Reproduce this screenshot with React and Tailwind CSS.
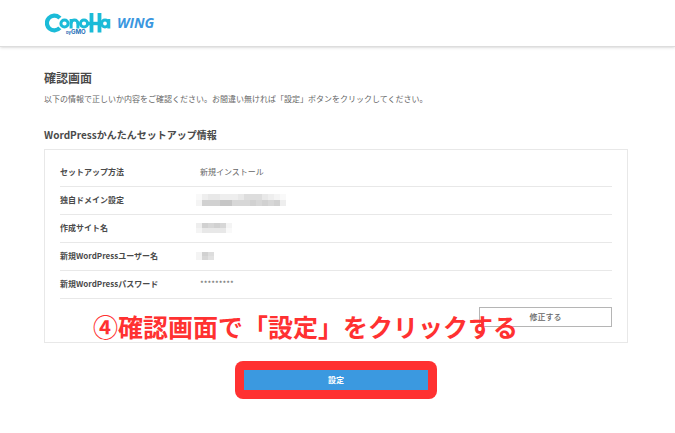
const ROWS = [
  { id: "method", label: "セットアップ方法", value: "新規インストール" },
  { id: "domain", label: "独自ドメイン設定", mask: "domain" },
  { id: "site", label: "作成サイト名", mask: "site" },
  { id: "user", label: "新規WordPressユーザー名", mask: "user" },
  { id: "password", label: "新規WordPressパスワード", value: "*********" },
];

// darkness of each mosaic cell, row by row
const MASKS = {
  domain: {
    cellHeight: 6,
    rows: [
      [1, 3, 4, 4, 3, 3, 3, 4, 6, 6, 6, 4, 3, 2, 1],
      [2, 8, 8, 8, 10, 10, 7, 7, 7, 8, 7, 8, 7, 8, 3],
    ],
  },
  site: {
    cellHeight: 5,
    rows: [
      [3, 8, 7, 8, 7, 2],
      [2, 4, 4, 4, 4, 1],
    ],
  },
  user: {
    cellHeight: 4,
    rows: [
      [2, 8, 6],
      [2, 7, 5],
    ],
  },
};

const Mosaic = ({ name }) => {
  const { cellHeight, rows } = MASKS[name];
  return (
    <svg
      className="-ml-1 block"
      width={6 * rows[0].length}
      height={cellHeight * rows.length}
      shapeRendering="crispEdges"
      aria-hidden="true"
    >
      {rows.map((row, y) =>
        row.map((v, x) => (
          <rect
            key={`${x}-${y}`}
            x={x * 6}
            y={y * cellHeight}
            width="6"
            height={cellHeight}
            fill="#333"
            opacity={v * 0.028}
          />
        ))
      )}
    </svg>
  );
};

const Logo = () => (
  <svg width="116" height="24" viewBox="0 0 116 24" role="img" aria-label="ConoHa WING">
    <g fill="none" stroke="#1bbbd8" strokeWidth="3">
      <circle cx="9.3" cy="12" r="7.4" strokeWidth="4.2" strokeDasharray="35.5 12" transform="rotate(42 9.3 12)" />
      <circle cx="19.5" cy="12.5" r="3.6" />
      <circle cx="29.5" cy="12.5" r="3.4" strokeDasharray="10.7 11" transform="rotate(180 29.5 12.5)" />
      <path d="M26.1 8v9.5M32.9 12v5.5" />
      <circle cx="39" cy="12.5" r="3.6" />
      <path d="M46.5 2v19.5M54.5 2v19.5" strokeWidth="3.8" />
      <path d="M42 12.5h16" strokeWidth="3.4" />
      <circle cx="60" cy="12.5" r="3.4" />
      <path d="M63.8 8v9.5" />
    </g>
    <text x="21" y="23" fontSize="4" fontWeight="700" fill="#2a6ab5" fontFamily="Inter, sans-serif">
      by
    </text>
    <text x="26" y="23" fontSize="6" fontWeight="700" fill="#1d6fb8" fontFamily="Inter, sans-serif">
      GMO
    </text>
    <text x="72" y="17" fontSize="14" fontWeight="700" fontStyle="italic" fill="#3b97e0" fontFamily="Open Sans, sans-serif">
      WING
    </text>
  </svg>
);

export default function App() {
  return (
    <div className="min-h-screen bg-white font-['Noto_Sans_CJK_JP',sans-serif] text-[8px] leading-3 text-[#666]">
      <header className="flex h-[47px] items-center border-b border-[#ddd] px-[45px] shadow-sm">
        <a href="#top">
          <Logo />
        </a>
      </header>

      <main className="pt-[23px] pr-[47px] pb-8 pl-11">
        <h1 className="text-[12px] leading-4 font-bold text-[#4a4a4a]">確認画面</h1>
        <p className="mt-[7px]">
          以下の情報で正しいか内容をご確認ください。お間違い無ければ「設定」ボタンをクリックしてください。
        </p>

        <h2 className="mt-[22px] text-[10px] leading-4 font-bold text-[#4a4a4a]">WordPressかんたんセットアップ情報</h2>

        <section className="relative mt-1.5 border border-[#e8e8e8] px-[15px] pt-2 pb-[15px]">
          <table className="w-full table-fixed">
            <tbody>
              {ROWS.map((row) => (
                <tr key={row.id} className="h-[28px] border-b border-[#e8e8e8]">
                  <th scope="row" className="w-[140px] text-left font-bold text-[#4a4a4a]">
                    {row.label}
                  </th>
                  <td>{row.mask ? <Mosaic name={row.mask} /> : row.value}</td>
                </tr>
              ))}
            </tbody>
          </table>
          <div className="mt-2 flex justify-end">
            <button type="button" className="h-5 w-[133px] border border-[#b5b5b5] bg-white font-medium">
              修正する
            </button>
          </div>
          <p className="pointer-events-none absolute bottom-0 left-12 text-[25px] leading-8 font-bold whitespace-nowrap text-[#ff3131]">
            ④確認画面で「設定」をクリックする
          </p>
        </section>

        <div className="mt-[18px] flex justify-center">
          <div className="rounded-lg bg-[#ff3131] p-[9px]">
            <button type="button" className="block h-5 w-[184px] bg-[#3b99e0] font-bold text-white">
              設定
            </button>
          </div>
        </div>
      </main>
    </div>
  );
}
